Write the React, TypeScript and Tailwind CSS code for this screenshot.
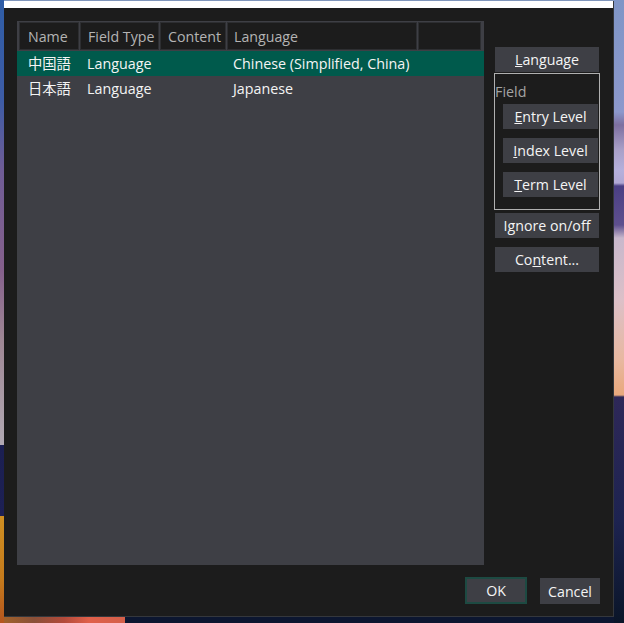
function Btn({ className, children }: { className: string; children: React.ReactNode }) {
  return (
    <button className={`flex items-center justify-center bg-[#3e3f45] pt-[2px] text-[14.2px] leading-none text-[#f4f4f4] ${className}`}>
      <span>{children}</span>
    </button>
  );
}

function HeaderCell({ w, label, pad = "pl-[7px]" }: { w: string; label?: string; pad?: string }) {
  return (
    <div className={`${w} ${pad} flex h-[28px] shrink-0 items-center border border-[#2d2e31] bg-[#1c1c1c] pt-[1px] text-[14.2px] text-[#b4b4b4]`}>
      {label}
    </div>
  );
}

function Row({ name, lang, selected }: { name: string; lang: string; selected?: boolean }) {
  return (
    <div className={`flex h-[25px] items-center text-[14.3px] text-[#f4f4f4] ${selected ? "bg-[#005a4c]" : ""}`}>
      <span className="w-[70px] shrink-0 pl-[11px]">{name}</span>
      <span className="w-[146px] shrink-0">Language</span>
      <span>{lang}</span>
    </div>
  );
}

export default function App() {
  return (
    <div className='flex h-[623px] w-[624px] overflow-hidden font-["Open_Sans","Noto_Sans_CJK_JP",sans-serif]'>
      <div className="h-full w-[4px] shrink-0 bg-[linear-gradient(180deg,#2f5da6_0px,#3d5ca6_100px,#6f5c96_170px,#85608c_270px,#9f8795_340px,#b1a9b3_445px,#1b1f52_445px,#1d2054_516px,#cf8f22_516px,#c47a1c_580px,#b4551e_623px)]" />
      <div className="flex h-full w-[610px] shrink-0 flex-col">
        <div className="h-[1px] shrink-0 bg-[#8096bc]" />
        <div className="flex h-[616px] shrink-0 flex-col border-r border-b border-[#34373c] bg-[#1c1c1c]">
          <div className="h-[7px] shrink-0 bg-white" />
          <div className="flex pt-[13px] pl-[13px]">
            <div className="h-[544px] w-[467px] shrink-0 bg-[#3e3f45]">
              <div className="flex h-[30px] gap-[1px] pt-[1px] pl-[2px]">
                <HeaderCell w="w-[60px]" label="Name" pad="pl-[8px]" />
                <HeaderCell w="w-[79px]" label="Field Type" />
                <HeaderCell w="w-[66px]" label="Content" />
                <HeaderCell w="w-[190px]" label="Language" pad="pl-[6px]" />
                <HeaderCell w="w-[63px]" />
              </div>
              <Row name="中国語" lang="Chinese (Simplified, China)" selected />
              <Row name="日本語" lang="Japanese" />
            </div>
            <div className="ml-[10px] flex w-[106px] shrink-0 flex-col pt-[26px]">
              <Btn className="mx-[1px] h-[25px] w-[104px]">
                <span className="underline">L</span>anguage
              </Btn>
              <div className="mt-[1px] flex h-[137px] flex-col items-start border border-[#b0b0b0]">
                <span className="mt-[8px] text-[14.3px] leading-[20px] text-[#a4a4a4]">Field</span>
                <div className="flex flex-col gap-[9px] pt-[2px] pl-[8px]">
                  <Btn className="h-[25px] w-[95px]">
                    <span className="underline">E</span>ntry Level
                  </Btn>
                  <Btn className="h-[25px] w-[95px]">
                    <span className="underline">I</span>ndex Level
                  </Btn>
                  <Btn className="h-[25px] w-[95px]">
                    <span className="underline">T</span>erm Level
                  </Btn>
                </div>
              </div>
              <Btn className="mx-[1px] mt-[3px] h-[25px] w-[104px]">
                I<span className="underline">g</span>nore on/off
              </Btn>
              <Btn className="mx-[1px] mt-[9px] h-[25px] w-[104px]">
                Co<span className="underline">n</span>tent...
              </Btn>
            </div>
          </div>
          <div className="flex items-start justify-end pt-[12px] pr-[13px]">
            <Btn className="h-[27px] w-[62px] border-2 border-[#1d4a42]">OK</Btn>
            <Btn className="mt-[1px] ml-[13px] h-[26px] w-[60px]">Cancel</Btn>
          </div>
        </div>
        <div className="flex h-[6px] shrink-0">
          <div className="w-[121px] bg-[linear-gradient(90deg,#a0612a_0px,#8a5038_30px,#b34a3a_60px,#e0604a_85px,#d4604a_121px)]" />
          <div className="flex-1 bg-[#0c1630]" />
        </div>
      </div>
      <div className="h-full flex-1 bg-[linear-gradient(180deg,#7f95c6_0px,#8c98cc_112px,#7d6fa0_125px,#a9a0c8_150px,#b5b0dc_170px,#b0a8d4_183px,#4a3f84_186px,#5e4f8e_225px,#c8b8cc_238px,#dcc0c8_300px,#e8b8a0_360px,#e9a87c_395px,#2e2858_397px,#1d2350_520px,#0a1528_623px)]" />
    </div>
  );
}
